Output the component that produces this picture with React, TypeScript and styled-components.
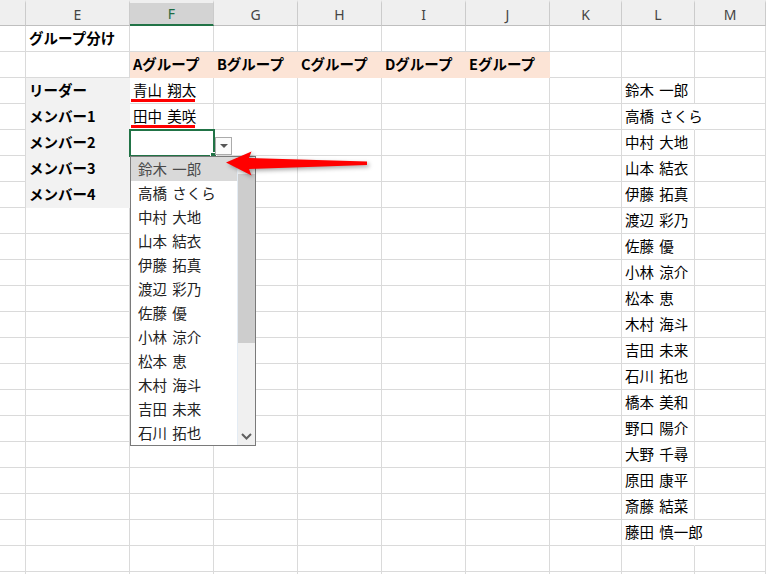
import React from "react"
import styled, { createGlobalStyle } from "styled-components"

const GlobalStyle = createGlobalStyle`
  html, body {
    margin: 0;
    padding: 0;
    background: #fff;
    overflow: hidden;
  }
  body {
    font-family: "Noto Sans CJK JP", "Noto Sans", sans-serif;
  }
`

const COLUMNS = ["", "E", "F", "G", "H", "I", "J", "K", "L", "M"]
const WIDTHS = [26, 104, 84, 84, 84, 84, 84, 72, 73, 71]
const ROW_COUNT = 22
const ACTIVE_COL = 2

const GROUPS = ["Aグループ", "Bグループ", "Cグループ", "Dグループ", "Eグループ"]
const LABELS = ["リーダー", "メンバー1", "メンバー2", "メンバー3", "メンバー4"]
const MEMBERS = [
  "鈴木 一郎",
  "高橋 さくら",
  "中村 大地",
  "山本 結衣",
  "伊藤 拓真",
  "渡辺 彩乃",
  "佐藤 優",
  "小林 涼介",
  "松本 恵",
  "木村 海斗",
  "吉田 未来",
  "石川 拓也",
  "橋本 美和",
  "野口 陽介",
  "大野 千尋",
  "原田 康平",
  "斎藤 結菜",
  "藤田 慎一郎",
]

type CellData = {
  text?: string
  bold?: boolean
  fill?: string
  marked?: boolean
  active?: boolean
  spill?: boolean
}

const buildRows = (): CellData[][] => {
  const rows: CellData[][] = Array.from({ length: ROW_COUNT }, () =>
    COLUMNS.map(() => ({}))
  )
  rows[0][1] = { text: "グループ分け", bold: true }
  GROUPS.forEach((g, i) => {
    rows[1][2 + i] = { text: g, bold: true, fill: "#fce4d6" }
  })
  LABELS.forEach((l, i) => {
    rows[2 + i][1] = { text: l, bold: true, fill: "#f2f2f2" }
  })
  rows[2][2] = { text: "青山 翔太", marked: true }
  rows[3][2] = { text: "田中 美咲", marked: true }
  rows[4][2] = { active: true }
  MEMBERS.forEach((m, i) => {
    rows[2 + i][8] = { text: m, spill: m.length > 5 }
  })
  return rows
}

const Sheet = styled.div`
  position: relative;
  display: grid;
  grid-template-columns: ${WIDTHS.map(w => `${w}px`).join(" ")};
  grid-auto-rows: 26px;
  width: 766px;
  height: 574px;
  overflow: hidden;
`

const HeaderCell = styled.div<{ $selected?: boolean }>`
  box-sizing: border-box;
  display: flex;
  align-items: center;
  justify-content: center;
  border-top: 3px solid #efefef;
  border-right: 1px solid #cbcbcb;
  border-bottom: ${p => (p.$selected ? "2px solid #217346" : "1px solid #bfbfbf")};
  background: ${p => (p.$selected ? "#d3d3d3" : "#efefef")};
  color: ${p => (p.$selected ? "#1e6b42" : "#444")};
  font-family: "Noto Sans", "Liberation Sans", sans-serif;
  font-size: 14px;
`

const Cell = styled.div<{
  $fill?: string
  $bold?: boolean
  $raised?: boolean
  $marked?: boolean
  $spill?: boolean
}>`
  position: ${p => (p.$raised || p.$marked ? "relative" : "static")};
  z-index: ${p => (p.$raised ? 3 : "auto")};
  box-sizing: border-box;
  display: flex;
  align-items: center;
  padding: 0 3px 3px;
  border-right: 1px solid ${p => (p.$spill ? "transparent" : p.$fill ?? "#dadada")};
  border-bottom: 1px solid ${p => p.$fill ?? "#dadada"};
  background: ${p => p.$fill ?? "transparent"};
  color: #000;
  font-size: 14.5px;
  word-spacing: 2px;
  font-weight: ${p => (p.$bold ? 700 : 400)};
  white-space: nowrap;

  ${p =>
    p.$marked &&
    `
    &::after {
      content: "";
      position: absolute;
      left: 1px;
      width: 64px;
      bottom: 1px;
      height: 3px;
      background: #ff0000;
    }
  `}
`

const Selection = styled.div`
  position: absolute;
  left: -1px;
  top: -1px;
  right: -2px;
  bottom: -2px;
  border: 2px solid #217346;
`

const FillHandle = styled.div`
  position: absolute;
  right: -4px;
  bottom: -4px;
  width: 5px;
  height: 5px;
  background: #217346;
  border: 1px solid #fff;
`

const DropButton = styled.div`
  position: absolute;
  left: 85px;
  top: 7px;
  box-sizing: border-box;
  width: 17px;
  height: 18px;
  border: 1px solid #ababab;
  background: #fbfbfb;
  display: flex;
  align-items: center;
  justify-content: center;

  &::after {
    content: "";
    border-left: 4px solid transparent;
    border-right: 4px solid transparent;
    border-top: 4px solid #555;
  }
`

const List = styled.div`
  position: absolute;
  left: 0;
  top: 26px;
  box-sizing: border-box;
  width: 126px;
  height: 290px;
  border: 1px solid #7a7a7a;
  background: #fff;
  display: flex;
  z-index: 5;
`

const Items = styled.div`
  flex: 1;
  display: flex;
  flex-direction: column;
`

const Item = styled.div<{ $hover?: boolean }>`
  height: 24px;
  flex: none;
  box-sizing: border-box;
  display: flex;
  align-items: center;
  padding: 0 0 2px 7px;
  background: ${p => (p.$hover ? "#d9d9d9" : "transparent")};
  color: ${p => (p.$hover ? "#4a4a4a" : "#222")};
  font-size: 14.5px;
  font-weight: 400;
  word-spacing: 2px;
`

const ScrollBar = styled.div`
  width: 17px;
  display: flex;
  flex-direction: column;
  background: #f0f0f0;
  border-left: 1px solid #e4ecf4;
`

const ScrollButton = styled.div`
  height: 17px;
  flex: none;
  display: flex;
  align-items: center;
  justify-content: center;
`

const Thumb = styled.div`
  height: 169px;
  background: #cdcdcd;
`

const Track = styled.div`
  flex: 1;
`

const Pointer = styled.svg`
  position: absolute;
  left: 220px;
  top: 145px;
  width: 156px;
  height: 40px;
  overflow: visible;
  z-index: 10;
  filter: drop-shadow(2px 2px 2px rgba(0, 0, 0, 0.35));
`

const Dropdown = () => (
  <>
    <Selection />
    <FillHandle />
    <DropButton />
    <List>
      <Items>
        {MEMBERS.slice(0, 12).map((m, i) => (
          <Item key={m} $hover={i === 0}>
            {m}
          </Item>
        ))}
      </Items>
      <ScrollBar>
        <ScrollButton />
        <Thumb />
        <Track />
        <ScrollButton>
          <svg width="11" height="7" viewBox="0 0 11 7">
            <path d="M1 1 L5.5 5.5 L10 1" fill="none" stroke="#606060" strokeWidth="2" />
          </svg>
        </ScrollButton>
      </ScrollBar>
    </List>
  </>
)

export default function App() {
  const rows = buildRows()
  return (
    <>
      <GlobalStyle />
      <Sheet>
        {COLUMNS.map((c, i) => (
          <HeaderCell key={`h${i}`} $selected={i === ACTIVE_COL}>
            {c}
          </HeaderCell>
        ))}
        {rows.map((row, r) =>
          row.map((cell, c) => (
            <Cell
              key={`${r}-${c}`}
              $fill={cell.fill}
              $bold={cell.bold}
              $raised={cell.active}
              $marked={cell.marked}
              $spill={cell.spill}
            >
              {cell.text}
              {cell.active && <Dropdown />}
            </Cell>
          ))
        )}
        <Pointer viewBox="0 0 156 40">
          <path
            d="M6 17.5 L31.5 6.5 L29 13 L147 16.5 L147 20 L29 24 L31.5 30.5 Z"
            fill="#ff0000"
          />
        </Pointer>
      </Sheet>
    </>
  )
}
